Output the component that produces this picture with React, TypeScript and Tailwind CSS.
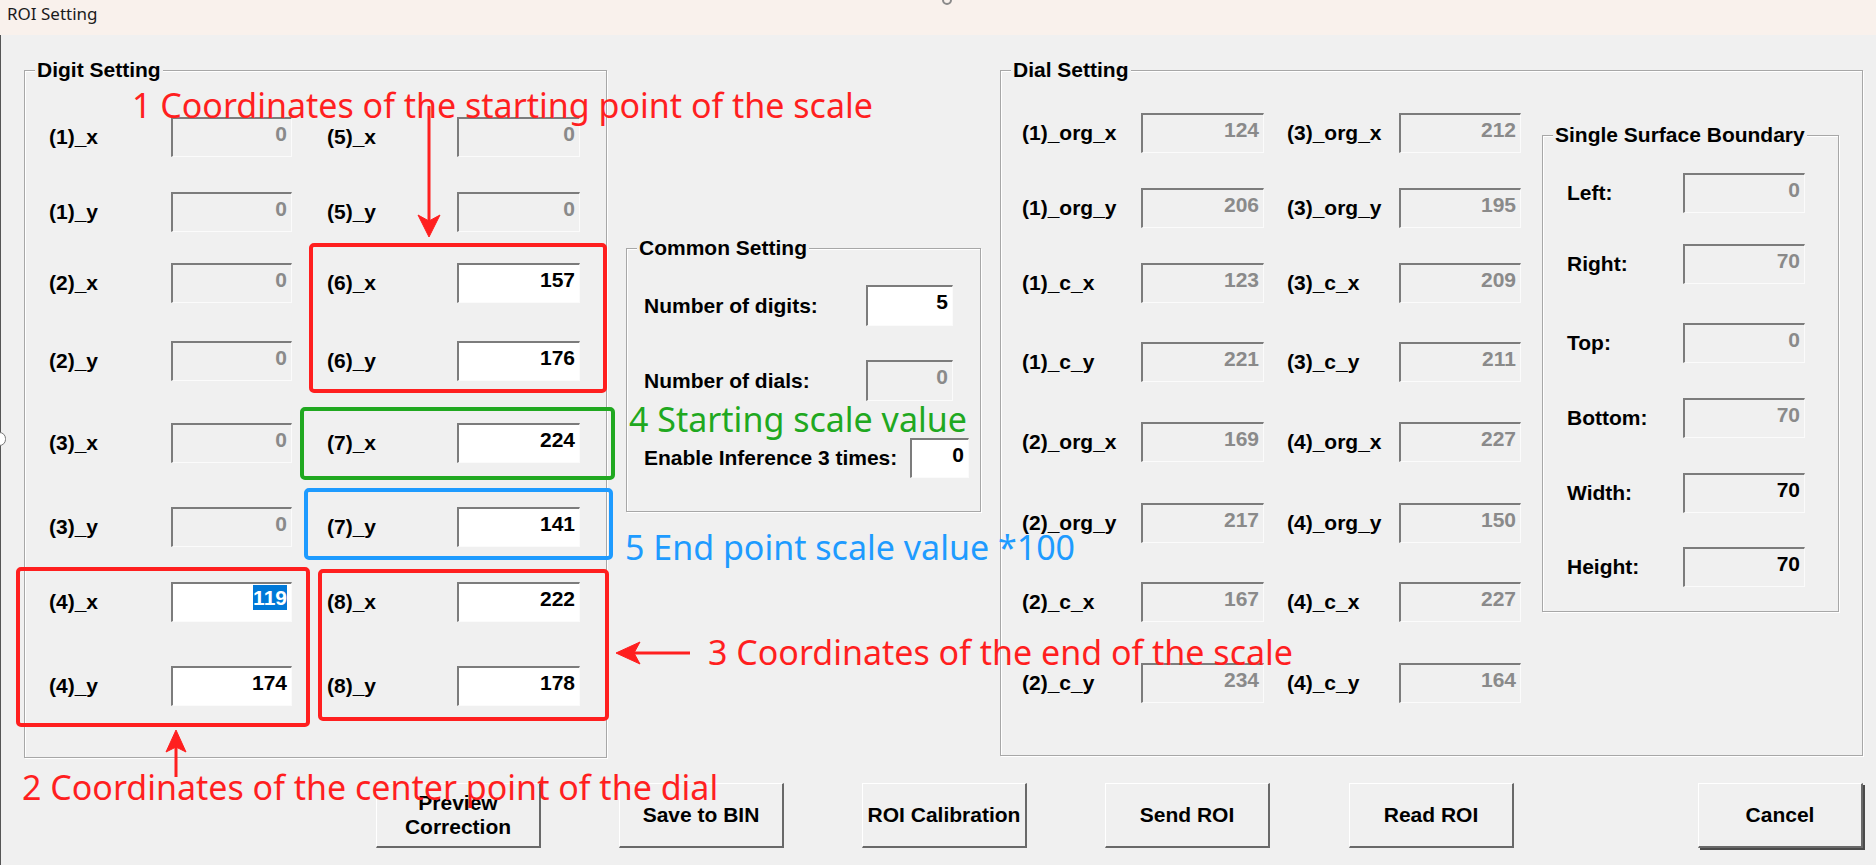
import type { ReactNode } from "react";

type Mode = "off" | "on" | "ro" | "sel";
type Cell = { label: string; value: string; mode: Mode };

// sunken Win32 edit box, right aligned number
function Edit({ value, mode, className }: { value: string; mode: Mode; className: string }) {
  const bg = mode === "on" || mode === "sel" ? "bg-white" : "bg-[#f0f0f0]";
  const color = mode === "off" ? "text-[#8a8a8a]" : "text-black";
  return (
    <div
      className={`${className} h-[40px] shrink-0 flex justify-end items-start border-t-2 border-l-2 border-r border-b border-t-[#7c7c7c] border-l-[#7c7c7c] border-r-[#fbfbfb] border-b-[#fbfbfb] pr-[4px] ${
        mode === "sel" ? "pt-[1px]" : "pt-[3px]"
      } ${bg}`}
    >
      {mode === "sel" ? (
        <span className="bg-[#0078d7] text-white leading-[25px]">{value}</span>
      ) : (
        <span className={`${color} leading-[24px]`}>{value}</span>
      )}
    </div>
  );
}

function Group({ title, className, children }: { title: string; className: string; children: ReactNode }) {
  return (
    <div className={`relative border border-[#a7a7a7] shadow-[inset_1px_1px_0_#ffffff,1px_1px_0_#ffffff] ${className}`}>
      <div className="absolute -top-[12px] left-[10px] px-[2px] bg-[#f0f0f0] leading-[22px] whitespace-nowrap">{title}</div>
      {children}
    </div>
  );
}

function Btn({ children, className = "" }: { children: ReactNode; className?: string }) {
  return (
    <button
      type="button"
      className={`w-[165px] h-[65px] shrink-0 flex items-center justify-center text-center leading-[24px] bg-[#f0f0f0] border-t border-l border-t-white border-l-white border-r-2 border-b-2 border-r-[#696969] border-b-[#696969] ${className}`}
    >
      {children}
    </button>
  );
}

const digitRows: { gap: string; a: Cell; b: Cell }[] = [
  { gap: "mt-[46px]", a: { label: "(1)_x", value: "0", mode: "off" }, b: { label: "(5)_x", value: "0", mode: "off" } },
  { gap: "mt-[35px]", a: { label: "(1)_y", value: "0", mode: "off" }, b: { label: "(5)_y", value: "0", mode: "off" } },
  { gap: "mt-[31px]", a: { label: "(2)_x", value: "0", mode: "off" }, b: { label: "(6)_x", value: "157", mode: "on" } },
  { gap: "mt-[38px]", a: { label: "(2)_y", value: "0", mode: "off" }, b: { label: "(6)_y", value: "176", mode: "on" } },
  { gap: "mt-[42px]", a: { label: "(3)_x", value: "0", mode: "off" }, b: { label: "(7)_x", value: "224", mode: "on" } },
  { gap: "mt-[44px]", a: { label: "(3)_y", value: "0", mode: "off" }, b: { label: "(7)_y", value: "141", mode: "on" } },
  { gap: "mt-[35px]", a: { label: "(4)_x", value: "119", mode: "sel" }, b: { label: "(8)_x", value: "222", mode: "on" } },
  { gap: "mt-[44px]", a: { label: "(4)_y", value: "174", mode: "on" }, b: { label: "(8)_y", value: "178", mode: "on" } },
];

const dialRows: { gap: string; a: Cell; b: Cell }[] = [
  { gap: "mt-[42px]", a: { label: "(1)_org_x", value: "124", mode: "off" }, b: { label: "(3)_org_x", value: "212", mode: "off" } },
  { gap: "mt-[35px]", a: { label: "(1)_org_y", value: "206", mode: "off" }, b: { label: "(3)_org_y", value: "195", mode: "off" } },
  { gap: "mt-[35px]", a: { label: "(1)_c_x", value: "123", mode: "off" }, b: { label: "(3)_c_x", value: "209", mode: "off" } },
  { gap: "mt-[39px]", a: { label: "(1)_c_y", value: "221", mode: "off" }, b: { label: "(3)_c_y", value: "211", mode: "off" } },
  { gap: "mt-[40px]", a: { label: "(2)_org_x", value: "169", mode: "off" }, b: { label: "(4)_org_x", value: "227", mode: "off" } },
  { gap: "mt-[41px]", a: { label: "(2)_org_y", value: "217", mode: "off" }, b: { label: "(4)_org_y", value: "150", mode: "off" } },
  { gap: "mt-[39px]", a: { label: "(2)_c_x", value: "167", mode: "off" }, b: { label: "(4)_c_x", value: "227", mode: "off" } },
  { gap: "mt-[41px]", a: { label: "(2)_c_y", value: "234", mode: "off" }, b: { label: "(4)_c_y", value: "164", mode: "off" } },
];

const boundRows: { gap: string; cell: Cell }[] = [
  { gap: "mt-[37px]", cell: { label: "Left:", value: "0", mode: "off" } },
  { gap: "mt-[31px]", cell: { label: "Right:", value: "70", mode: "off" } },
  { gap: "mt-[39px]", cell: { label: "Top:", value: "0", mode: "off" } },
  { gap: "mt-[35px]", cell: { label: "Bottom:", value: "70", mode: "off" } },
  { gap: "mt-[35px]", cell: { label: "Width:", value: "70", mode: "ro" } },
  { gap: "mt-[34px]", cell: { label: "Height:", value: "70", mode: "ro" } },
];

const note = "absolute whitespace-nowrap text-[34px] leading-none font-normal font-['Noto_Sans',sans-serif]";

export default function App() {
  return (
    <div className="relative w-[1876px] h-[865px] overflow-hidden bg-[#f0f0f0] text-black text-[21px] font-bold font-['Liberation_Sans',Arial,sans-serif]">
      {/* caption */}
      <div className="h-[35px] bg-[#f9f1ec] pl-[7px] pt-[2px] leading-[24px] text-[17px] font-normal text-[#1b1b1b] font-['Noto_Sans',sans-serif]">
        ROI Setting
      </div>
      <div className="absolute left-[942px] -top-[5px] w-[10px] h-[10px] rounded-full border-2 border-[#8a8a8a]" />

      <div className="h-[830px] border-l border-[#555555]">
        <div className="flex items-start pt-[35px]">
          {/* Digit Setting */}
          <Group title="Digit Setting" className="ml-[23px] w-[583px] h-[688px]">
            <div className="flex flex-col">
              {digitRows.map((r) => (
                <div key={r.a.label} className={`${r.gap} flex items-center h-[40px] pl-[24px]`}>
                  <div className="w-[122px]">{r.a.label}</div>
                  <Edit value={r.a.value} mode={r.a.mode} className="w-[121px]" />
                  <div className="ml-[35px] w-[130px]">{r.b.label}</div>
                  <Edit value={r.b.value} mode={r.b.mode} className="w-[123px]" />
                </div>
              ))}
            </div>
          </Group>

          {/* Common Setting */}
          <Group title="Common Setting" className="ml-[19px] mt-[178px] w-[355px] h-[264px]">
            <div className="flex flex-col pl-[17px]">
              <div className="mt-[36px] flex items-center">
                <div className="w-[222px]">Number of digits:</div>
                <Edit value="5" mode="on" className="w-[87px] h-[41px]" />
              </div>
              <div className="mt-[34px] flex items-center">
                <div className="w-[222px]">Number of dials:</div>
                <Edit value="0" mode="off" className="w-[87px] h-[41px]" />
              </div>
              <div className="mt-[37px] flex items-center">
                <div className="w-[266px]">Enable Inference 3 times:</div>
                <Edit value="0" mode="on" className="w-[59px]" />
              </div>
            </div>
          </Group>

          {/* Dial Setting */}
          <Group title="Dial Setting" className="ml-[19px] w-[863px] h-[686px]">
            <div className="flex items-start">
              <div className="flex flex-col">
                {dialRows.map((r) => (
                  <div key={r.a.label} className={`${r.gap} flex items-center h-[40px] pl-[21px]`}>
                    <div className="w-[119px]">{r.a.label}</div>
                    <Edit value={r.a.value} mode={r.a.mode} className="w-[123px]" />
                    <div className="ml-[23px] w-[112px]">{r.b.label}</div>
                    <Edit value={r.b.value} mode={r.b.mode} className="w-[122px]" />
                  </div>
                ))}
              </div>
              <Group title="Single Surface Boundary" className="ml-[21px] mt-[64px] w-[297px] h-[477px]">
                <div className="flex flex-col pl-[24px]">
                  {boundRows.map((r) => (
                    <div key={r.cell.label} className={`${r.gap} flex items-center h-[40px]`}>
                      <div className="w-[116px]">{r.cell.label}</div>
                      <Edit value={r.cell.value} mode={r.cell.mode} className="w-[122px]" />
                    </div>
                  ))}
                </div>
              </Group>
            </div>
          </Group>
        </div>

        {/* dialog buttons */}
        <div className="mt-[25px] flex items-start pl-[375px]">
          <Btn>
            Preview
            <br />
            Correction
          </Btn>
          <Btn className="ml-[78px]">Save to BIN</Btn>
          <Btn className="ml-[78px]">ROI Calibration</Btn>
          <Btn className="ml-[78px]">Send ROI</Btn>
          <Btn className="ml-[79px]">Read ROI</Btn>
          <Btn className="ml-[184px] shadow-[2px_2px_0_#4a4a4a]">Cancel</Btn>
        </div>
      </div>
      <div className="absolute -left-[7px] top-[432px] w-[13px] h-[14px] rounded-full border border-[#777777] bg-white" />

      {/* callouts */}
      <svg className="absolute inset-0 pointer-events-none" width="1876" height="865" viewBox="0 0 1876 865">
        <g fill="none" strokeWidth="4" strokeLinejoin="round">
          <rect x="311" y="245" width="294" height="146" rx="3" stroke="#ff1f1f" />
          <rect x="302" y="409" width="311" height="69" rx="3" stroke="#20a820" />
          <rect x="306" y="490" width="305" height="68" rx="3" stroke="#1e9bff" />
          <rect x="18" y="569" width="290" height="156" rx="3" stroke="#ff1f1f" />
          <rect x="320" y="571" width="287" height="148" rx="3" stroke="#ff1f1f" />
        </g>
        <g fill="#ff1f1f" stroke="#ff1f1f">
          <line x1="429" y1="106" x2="429" y2="224" strokeWidth="3" />
          <polygon points="429,237 418,215 429,221 440,215" strokeWidth="1" />
          <line x1="176" y1="777" x2="176" y2="744" strokeWidth="3" />
          <polygon points="176,730 166,752 176,747 186,752" strokeWidth="1" />
          <line x1="690" y1="653" x2="630" y2="653" strokeWidth="3" />
          <polygon points="616,653 640,642 634,653 640,664" strokeWidth="1" />
        </g>
      </svg>
      <div className={`${note} left-[132px] top-[88px] text-[#ff1f1f]`}>1 Coordinates of the starting point of the scale</div>
      <div className={`${note} left-[629px] top-[402px] text-[#20a820]`}>4 Starting scale value</div>
      <div className={`${note} left-[625px] top-[530px] text-[#1e9bff]`}>5 End point scale value *100</div>
      <div className={`${note} left-[708px] top-[635px] text-[#ff1f1f]`}>3 Coordinates of the end of the scale</div>
      <div className={`${note} left-[22px] top-[770px] text-[#ff1f1f]`}>2 Coordinates of the center point of the dial</div>
    </div>
  );
}
